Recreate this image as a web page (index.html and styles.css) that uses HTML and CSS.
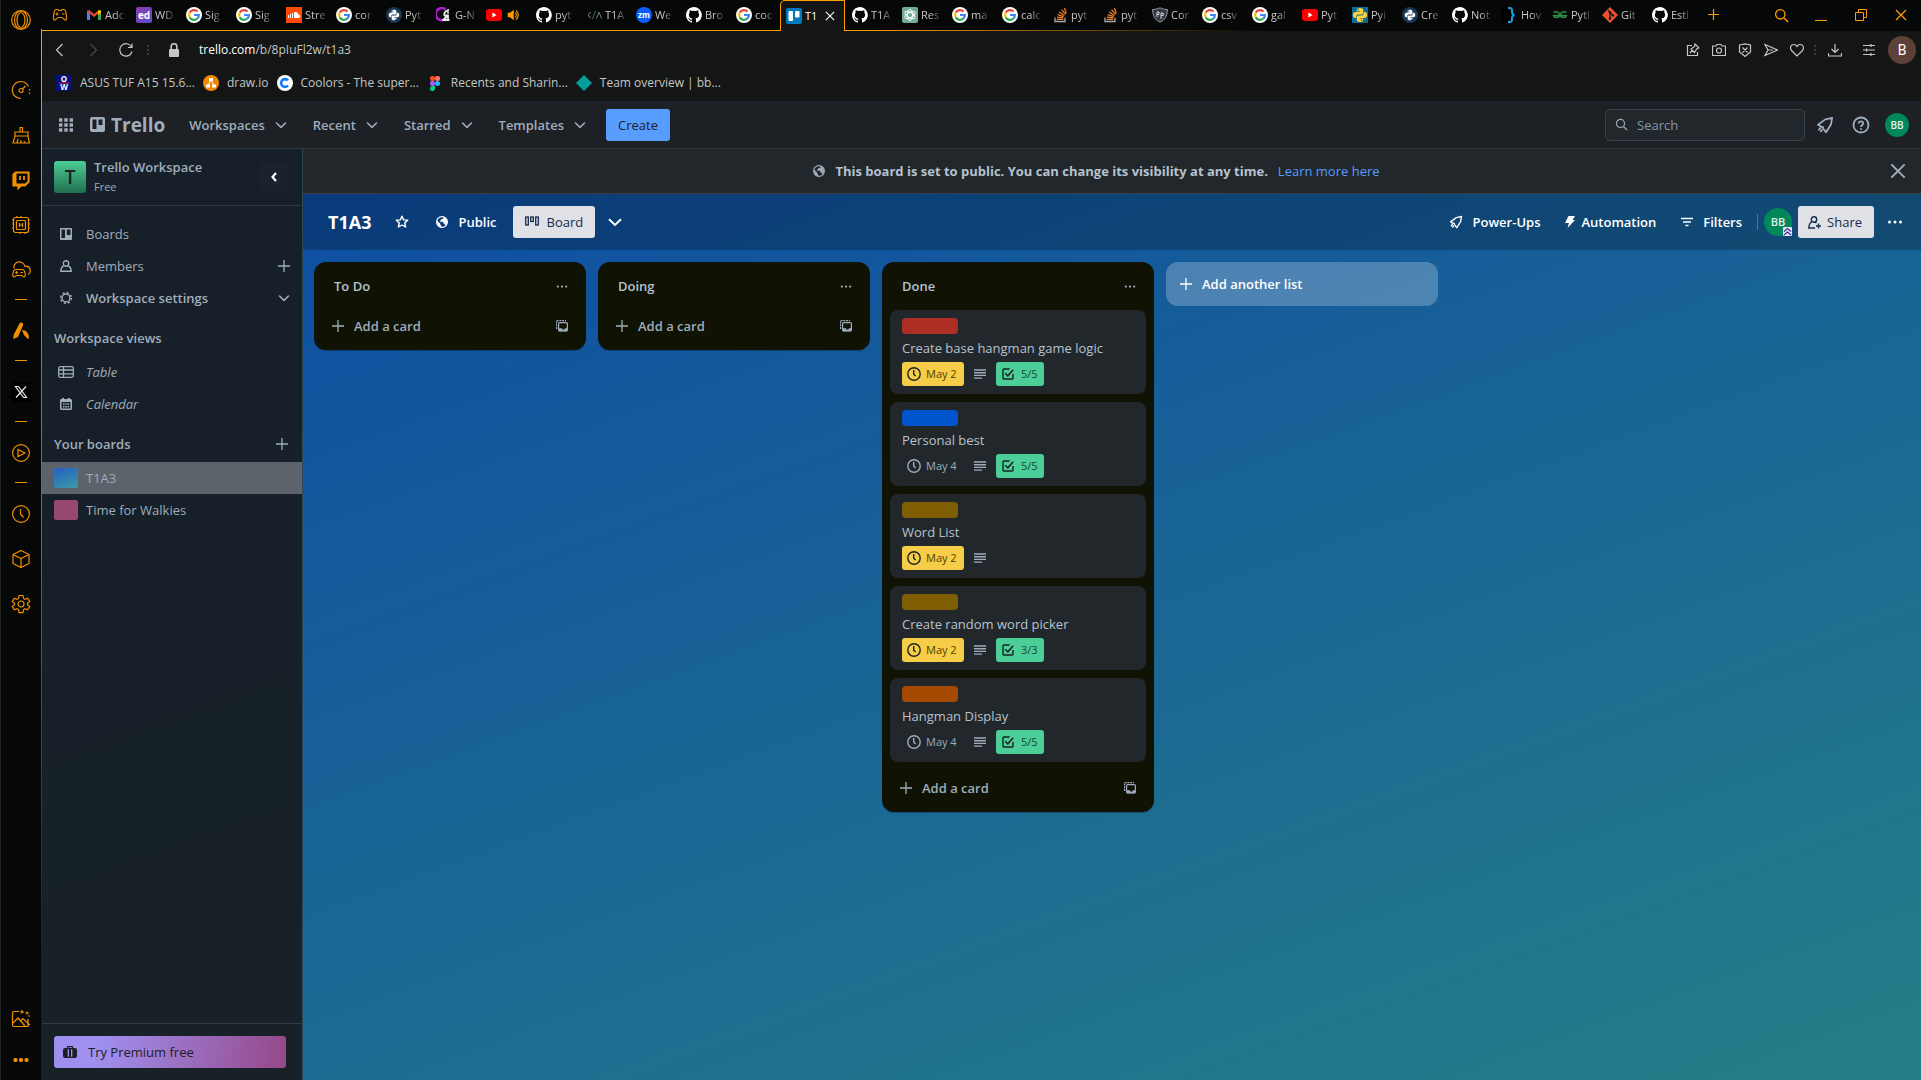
FILE: index.html
```html
<!DOCTYPE html>
<html lang="en">
<head>
<meta charset="utf-8">
<meta name="viewport" content="width=device-width, initial-scale=1">
<title>T1A3 | Trello</title>
<link rel="stylesheet" href="styles.css">
</head>
<body>
<svg class="defs" aria-hidden="true">
  <defs>
    <linearGradient id="edx" x1="0" y1="0" x2="1" y2="1"><stop offset="0" stop-color="#8a3fa8"/><stop offset="1" stop-color="#5b4bd0"/></linearGradient>
    <symbol id="google" viewBox="0 0 16 16"><circle cx="8" cy="8" r="8" fill="#fff"/><g fill="none" stroke-width="2.2"><path d="M11.6 4.6A4.9 4.9 0 0 0 3.7 5.6" stroke="#ea4335"/><path d="M3.7 5.6a4.9 4.9 0 0 0 0 4.8" stroke="#fbbc05"/><path d="M3.7 10.4a4.9 4.9 0 0 0 7.5 1.3" stroke="#34a853"/><path d="M11.2 11.7A4.9 4.9 0 0 0 12.9 8H8" stroke="#4285f4"/></g></symbol>
    <symbol id="github" viewBox="0 0 16 16"><path fill="#fff" d="M8 0C3.6 0 0 3.6 0 8c0 3.5 2.3 6.500 5.500 7.600.4.1.5-.2.500-.4v-1.400c-2.200.5-2.700-1-2.700-1-.4-.9-.9-1.200-.9-1.200-.7-.5.1-.5.1-.5.8.1 1.200.8 1.200.8.7 1.200 1.900.9 2.300.7.1-.5.3-.9.5-1.100-1.800-.2-3.600-.9-3.600-4 0-.9.3-1.600.8-2.100-.1-.2-.4-1 .1-2.100 0 0 .7-.2 2.200.8a7.600 7.600 0 0 1 4 0c1.500-1 2.200-.8 2.200-.8.4 1.100.2 1.900.1 2.100.5.6.8 1.300.8 2.100 0 3.100-1.900 3.700-3.600 3.900.3.300.5.800.5 1.500v2.200c0 .2.100.5.600.4A8 8 0 0 0 8 0z"/></symbol>
    <symbol id="youtube" viewBox="0 0 16 16"><rect y="2" width="16" height="12" rx="3" fill="#f00"/><path d="M6.400 5.500v5l4.200-2.500z" fill="#fff"/></symbol>
    <symbol id="pysnake" viewBox="0 0 16 16"><path fill="currentColor" d="M7.900 1C5.500 1 4.800 2 4.800 3v1.500h3.300v.6H3.300C2 5.100 1 6 1 8s.9 2.900 2 2.900h1.300V9.400c0-1.200 1-2 2.100-2h3c1 0 1.800-.8 1.800-1.700V3c0-1.200-1.200-2-3.300-2zM6.400 2.100a.7.7 0 1 1 0 1.400.7.7 0 0 1 0-1.400z"/><path fill="currentColor" d="M8.100 15c2.400 0 3.100-1 3.100-2v-1.500H7.900v-.6h4.800C14 10.900 15 10 15 8s-.9-2.900-2-2.900h-1.300v1.500c0 1.200-1 2-2.100 2h-3c-1 0-1.800.8-1.800 1.700V13c0 1.200 1.200 2 3.300 2zm1.500-1.100a.7.7 0 1 1 0-1.400.7.7 0 0 1 0 1.400z"/></symbol>
    <symbol id="python" viewBox="0 0 16 16"><circle cx="8" cy="8" r="8" fill="#1b3854"/><svg x="2" y="2" width="12" height="12"><use href="#pysnake" color="#fff"/></svg></symbol>
    <symbol id="stack" viewBox="0 0 16 16"><path d="M3 10.500V14.500h10V10.500" fill="none" stroke="#aaa" stroke-width="1.300"/><path d="M4.800 12.400h6.400M5 10.100l6.200.8M5.700 7.600l5.900 2M7.200 5l5.200 3.500M9.500 2.600l4 4.800M12.500 1l1.700 5.500" stroke="#f48024" stroke-width="1.200"/></symbol>
    <symbol id="chev" viewBox="0 0 12 12"><path d="M1.500 4l4.500 4.300L10.500 4" fill="none" stroke="currentColor" stroke-width="1.600" stroke-linecap="round" stroke-linejoin="round"/></symbol>
    <symbol id="plus" viewBox="0 0 12 12"><path d="M6 0v12M0 6h12" stroke="currentColor" stroke-width="1.300"/></symbol>
    <symbol id="cross" viewBox="0 0 12 12"><path d="M1 1l10 10M11 1L1 11" stroke="currentColor" stroke-width="1.300"/></symbol>
    <symbol id="globe" viewBox="0 0 12 12"><circle cx="6" cy="6" r="5.400" fill="none" stroke="currentColor" stroke-width="1.200"/><path fill="currentColor" d="M1 4.500l3.300 3.200v1l1 1v1.800C2.500 11 .7 8.500 1 4.500zM7.500 1v1.200L6.300 3.300H5v1.200H4v1.300h3.300v1.600l1.400.3.500 2.100C12 7.500 11.800 2.500 7.500 1z"/></symbol>
    <symbol id="search" viewBox="0 0 16 16"><circle cx="6.700" cy="6.700" r="5" fill="none" stroke="currentColor" stroke-width="1.400"/><path d="M10.400 10.400L15 15" stroke="currentColor" stroke-width="1.500"/></symbol>
    <symbol id="rocket" viewBox="0 0 16 16"><path d="M14.300 1.700L8.300 3 1.800 7.800l2.600 1.600 1.600.2.600 1.900 2.300 3 4.400-6.900zM2.600 12.200l1.300-1.400M4.200 13.700l1-1.100" fill="none" stroke="currentColor" stroke-width="1.600" stroke-linejoin="round" stroke-linecap="round"/></symbol>
    <symbol id="dots" viewBox="0 0 16 4"><circle cx="2.500" cy="2" r="1.500" fill="currentColor"/><circle cx="8" cy="2" r="1.500" fill="currentColor"/><circle cx="13.500" cy="2" r="1.500" fill="currentColor"/></symbol>
    <symbol id="template" viewBox="0 0 12 12"><path d="M.6 9V.6H10" fill="none" stroke="currentColor" stroke-width="1.200" stroke-dasharray="2 .8"/><rect x="2.600" y="2.600" width="8.800" height="8" rx="1" fill="none" stroke="currentColor" stroke-width="1.200"/><path d="M2.600 8.200h3.600v1.200h2.400V8.200h2.800v3.400H2.600z" fill="currentColor"/></symbol>
    <symbol id="clock" viewBox="0 0 16 16"><circle cx="8" cy="8" r="6.200" fill="none" stroke="currentColor" stroke-width="1.400"/><path d="M7.700 4v4.300l2 1.800" fill="none" stroke="currentColor" stroke-width="1.400"/></symbol>
    <symbol id="lines" viewBox="0 0 12 10"><path d="M0 1h12M0 3.700h12M0 6.400h12M0 9.100h8" stroke="currentColor" stroke-width="1.400"/></symbol>
    <symbol id="check" viewBox="0 0 12 12"><path d="M7.500 1H1.700a.7.700 0 0 0-.7.700v8.600c0 .4.300.7.700.7h8.600c.4 0 .7-.3.700-.7V6" fill="none" stroke="currentColor" stroke-width="1.400"/><path d="M3.200 5.200l2.600 2.600 5.400-6" fill="none" stroke="currentColor" stroke-width="1.500"/></symbol>
  </defs>
</svg>
<div class="browser">
  <nav class="dock" aria-label="Browser sidebar">
    <a href="#" class="dock-home" aria-label="Opera"><svg width="22" height="22" viewBox="0 0 22 22"><circle cx="11" cy="11" r="9.300"/><ellipse cx="11" cy="11" rx="6.500" ry="9"/><ellipse cx="11" cy="11" rx="4" ry="7.500"/></svg></a>
    <div class="dock-items">
      <a href="#" aria-label="Speed"><svg width="20" height="20" viewBox="0 0 20 20"><path d="M10 18.500A8.500 8.500 0 1 1 17.500 6.500"/><path d="M18.500 9v6" stroke-dasharray="1.500 2"/><circle cx="10" cy="10.500" r="2"/><path d="M11.500 9l3-3"/></svg></a>
      <a href="#" aria-label="Cleaner"><svg width="20" height="20" viewBox="0 0 20 20"><path d="M9 7V2.500h2.500V7M4 11V7h13v4M4 11h13l1.500 7H2zM6 18l1-4M10 18v-3M14 18l-1-2"/></svg></a>
      <a href="#" aria-label="Twitch"><svg width="20" height="20" viewBox="0 0 20 20"><path d="M2 4.500L4.500 2H18v10l-4 4h-4l-3 3v-3H2z" fill="currentColor"/><path d="M5.500 3.500H16.500v8L14 13.500H5.500z" fill="#060807" stroke="none"/><path d="M9 6v4M13 6v4" stroke-width="1.800"/></svg></a>
      <a href="#" aria-label="Limiter"><svg width="20" height="20" viewBox="0 0 20 20"><rect x="2.500" y="2.500" width="15" height="15" rx="2"/><rect x="5.500" y="5.500" width="9" height="9" rx="1"/><path d="M8.500 8v4M11.500 8v4M8.500 10h3M1 5h2M1 9h2M1 13h2M17 5h2M17 9h2M17 13h2M6 1v2M10 1v2M14 17v2M9 17v2"/></svg></a>
      <a href="#" aria-label="Cloud gaming"><svg width="20" height="20" viewBox="0 0 20 20"><path d="M3 8.500a5.500 5.500 0 0 1 10.800-2.300A4.500 4.500 0 0 1 17 14.500"/><path d="M4.500 9.500h7c2.500 0 4 7.500 1.500 7.500-1.500 0-1.500-1.500-2.500-1.500h-5C4.500 15.500 4.500 17 3 17 .5 17 2 9.500 4.500 9.500zM4 12.500h3M5.500 11v3M9.500 12.500h2.500" /></svg></a>
      <span class="dash"></span>
      <a href="#" aria-label="Messenger"><svg width="20" height="20" viewBox="0 0 20 20"><path d="M10 1.500c2 0 2.500 1.500 2 3L7 16l-5 2 1-5 5-9.500c.5-1.300 1-2 2-2zM11 9c4 0 7 3 7 8l-1 1-4-4z" fill="currentColor" stroke="none"/></svg></a>
      <span class="dash"></span>
      <a href="#" aria-label="X"><svg width="20" height="20" viewBox="0 0 20 20"><rect width="20" height="20" rx="3" fill="#000" stroke="none"/><path d="M4.500 4.500h3l8 11h-3zM15 4.500L5 15.500" stroke="#e8e8e8"/></svg></a>
      <span class="dash"></span>
      <a href="#" aria-label="Player"><svg width="20" height="20" viewBox="0 0 20 20"><circle cx="10" cy="10" r="8.400"/><path d="M7 6.500l7 3.500-7 3.500z"/></svg></a>
      <span class="dash"></span>
      <a href="#" aria-label="History"><svg width="20" height="20" viewBox="0 0 20 20"><circle cx="10" cy="10" r="8.400"/><path d="M9.500 5v5l3 3.500"/></svg></a>
      <a href="#" aria-label="Extensions"><svg width="20" height="20" viewBox="0 0 20 20"><path d="M10 1.500l8 4v9l-8 4-8-4v-9zM2 5.500l8 4 8-4M10 9.500v9"/></svg></a>
      <a href="#" aria-label="Settings"><svg width="20" height="20" viewBox="0 0 20 20"><path d="M8 1.500h4l.5 3 1.500.9 2.700-1.100 2 3.400L16.500 9.300v1.500l2.200 1.600-2 3.400-2.700-1.100-1.500.9-.5 3H8l-.5-3L6 14.700l-2.700 1.100-2-3.400 2.200-1.600V9.300L1.300 7.700l2-3.400L6 5.400l1.500-.9z"/><circle cx="10" cy="10" r="3"/></svg></a>
    </div>
    <div class="dock-foot">
      <a href="#" aria-label="Wallpaper"><svg width="20" height="20" viewBox="0 0 20 20"><path d="M8 2.500H3a1.500 1.500 0 0 0-1.500 1.500v12A1.500 1.500 0 0 0 3 17.500h14V10M2 14l5-5 7 8M9.500 12L12 9.500l7 6.500M11 1v3.500M9 3h4M16 2.500v3M14.500 4h3.500M17 7h2"/></svg></a>
      <a href="#" aria-label="More"><svg width="16" height="4"><use href="#dots"/></svg></a>
    </div>
  </nav>

  <div class="window">
    <header class="tabstrip">
      <svg class="gx" width="16" height="14" viewBox="0 0 16 14"><path d="M4 1.500h2l.7 1h2.600l.7-1h2c2 0 3.500 9.500 1.700 10.500-1.500.8-2.500-2.500-4-2.500H6.300c-1.500 0-2.500 3.300-4 2.500C.5 11 2 1.500 4 1.500zM3.500 6h3M5 4.500v3M10 6h2.500"/></svg>
      <div class="tabs">
        <a href="#" class="tab"><svg viewBox="0 0 16 16"><path d="M1 13V3.500h3V13z" fill="#4285f4"/><path d="M12 13V3.500h3V13z" fill="#34a853"/><path d="M1 4.500L3 3l5 4 5-4 2 1.500L8 10z" fill="#ea4335"/><path d="M12 3.500h3V6l-3 2z" fill="#fbbc04"/></svg><span>Adc</span></a>
        <a href="#" class="tab"><svg viewBox="0 0 16 16"><rect width="16" height="16" rx="2" fill="url(#edx)"/><text x="8" y="11.500" class="fav-ed">ed</text></svg><span>WD</span></a>
        <a href="#" class="tab"><svg><use href="#google"/></svg><span>Sig</span></a>
        <a href="#" class="tab"><svg><use href="#google"/></svg><span>Sig</span></a>
        <a href="#" class="tab"><svg viewBox="0 0 16 16"><rect width="16" height="16" fill="#ff4a0a"/><path d="M2.500 8v3M4.500 7v4M6.500 6v5" stroke="#fff"/><path d="M8 5.500c2-1 4 0 4.300 2 2.200-.3 2.700 3.500 0 3.500H8z" fill="#fff"/></svg><span>Stre</span></a>
        <a href="#" class="tab"><svg><use href="#google"/></svg><span>cor</span></a>
        <a href="#" class="tab"><svg><use href="#python"/></svg><span>Pyt</span></a>
        <a href="#" class="tab"><svg viewBox="0 0 16 16"><path d="M9.500 2.500A6 6 0 1 0 7 13" fill="none" stroke="#b21fd0" stroke-width="2.500"/><path d="M13 2.800C9 3.500 7.500 7 8.500 8.500H12V13M12 4.500v2M6.500 13.500l5-4.500M8 13h5.500" fill="none" stroke="#eee" stroke-width="1.800"/></svg><span>G-N</span></a>
        <a href="#" class="tab"><svg><use href="#youtube"/></svg><svg class="sound" viewBox="0 0 16 16"><path d="M1 5h3l5-4v14l-5-4H1z" fill="#ff9c00"/><path d="M11 5c2 1.500 2 4.500 0 6M12 2c4 3 4 9 0 12" fill="none" stroke="#ff9c00" stroke-width="1.500"/></svg></a>
        <a href="#" class="tab"><svg><use href="#github"/></svg><span>pyt</span></a>
        <a href="#" class="tab"><svg viewBox="0 0 16 16"><path d="M5 5.500a2.500 2.500 0 1 0 0 5M10.500 11.500L13 5l2.500 6.500" fill="none" stroke="#777"/><path d="M6.500 12l3-8" stroke="#2f7a4a"/></svg><span>T1A</span></a>
        <a href="#" class="tab"><svg viewBox="0 0 16 16"><circle cx="8" cy="8" r="8" fill="#0b5cff"/><text x="8" y="10.500" class="fav-zm">zm</text></svg><span>We</span></a>
        <a href="#" class="tab"><svg><use href="#github"/></svg><span>Bro</span></a>
        <a href="#" class="tab"><svg><use href="#google"/></svg><span>coc</span></a>
        <a href="#" class="tab active"><svg viewBox="0 0 16 16"><rect width="16" height="16" rx="2" fill="#0079bf"/><rect x="2.500" y="3" width="4.500" height="10" rx="1" fill="#fff"/><rect x="9" y="3" width="4.500" height="6.500" rx="1" fill="#fff"/></svg><span>T1</span><svg class="tab-x"><use href="#cross"/></svg></a>
        <a href="#" class="tab"><svg><use href="#github"/></svg><span>T1A</span></a>
        <a href="#" class="tab"><svg viewBox="0 0 16 16"><rect width="16" height="16" rx="2" fill="#74aa9c"/><g fill="none" stroke="#fff" stroke-width=".9"><ellipse cx="8" cy="8" rx="2.600" ry="5.600"/><ellipse cx="8" cy="8" rx="2.600" ry="5.600" transform="rotate(60 8 8)"/><ellipse cx="8" cy="8" rx="2.600" ry="5.600" transform="rotate(120 8 8)"/></g></svg><span>Res</span></a>
        <a href="#" class="tab"><svg><use href="#google"/></svg><span>ma</span></a>
        <a href="#" class="tab"><svg><use href="#google"/></svg><span>calc</span></a>
        <a href="#" class="tab"><svg><use href="#stack"/></svg><span>pyt</span></a>
        <a href="#" class="tab"><svg><use href="#stack"/></svg><span>pyt</span></a>
        <a href="#" class="tab"><svg viewBox="0 0 16 16"><path d="M.5 2.500C5 2.500 6 1 8 1s3 1.500 7.500 1.500C15 9 13 13 8 15 3 13 1 9 .5 2.500z" fill="#33353f" stroke="#9a9da8"/><path d="M5 10V5h2v2.500H5M9 12V6h2.200v2.500H9" fill="none" stroke="#d5d7e0"/></svg><span>Cor</span></a>
        <a href="#" class="tab"><svg><use href="#google"/></svg><span>csv</span></a>
        <a href="#" class="tab"><svg><use href="#google"/></svg><span>gal</span></a>
        <a href="#" class="tab"><svg><use href="#youtube"/></svg><span>Pyt</span></a>
        <a href="#" class="tab"><svg viewBox="0 0 16 16"><rect width="16" height="16" fill="#0e6a94"/><use href="#pysnake" class="snake"/></svg><span>Pyi</span></a>
        <a href="#" class="tab"><svg><use href="#python"/></svg><span>Cre</span></a>
        <a href="#" class="tab"><svg><use href="#github"/></svg><span>Not</span></a>
        <a href="#" class="tab"><svg viewBox="0 0 16 16"><rect width="8" height="16" fill="#000"/><path d="M6 1h2c2 0 2 1 2 3s0 4 2.500 4C10 8 10 10 10 12s0 3-2 3H6" fill="none" stroke="#18a0e0" stroke-width="2"/></svg><span>Hov</span></a>
        <a href="#" class="tab"><svg viewBox="0 0 16 16"><path d="M1.500 5.500c4-2 6 0 6 2.500S3 12 1.500 8.500h13C13 12 8.500 10.500 8.500 8s2-4.500 6-2.500" fill="none" stroke="#2f8d46" stroke-width="1.500"/></svg><span>Pytl</span></a>
        <a href="#" class="tab"><svg viewBox="0 0 16 16"><path d="M8 0l8 8-8 8-8-8z" fill="#f05133"/><path d="M6 3l2 2.500V11M8.500 6l2.500 2.500" stroke="#111" fill="none" stroke-width="1.200"/><circle cx="8" cy="11.500" r="1.300" fill="#111"/><circle cx="8" cy="5.300" r="1.200" fill="#111"/><circle cx="11" cy="8.500" r="1.200" fill="#111"/></svg><span>Git</span></a>
        <a href="#" class="tab"><svg><use href="#github"/></svg><span>Estl</span></a>
      </div>
      <button class="tab-new" aria-label="New tab"><svg><use href="#plus"/></svg></button>
      <div class="win-buttons">
        <button aria-label="Search tabs"><svg width="15" height="15"><use href="#search"/></svg></button>
        <button aria-label="Minimize"><svg width="12" height="12" viewBox="0 0 12 12"><path d="M0 11.500h12" stroke="currentColor"/></svg></button>
        <button aria-label="Restore"><svg width="12" height="12" viewBox="0 0 12 12"><path d="M.5 3.500h8v8h-8zM3.500 3.500v-3h8v8h-3" fill="none" stroke="currentColor"/></svg></button>
        <button aria-label="Close"><svg width="12" height="12"><use href="#cross"/></svg></button>
      </div>
    </header>

    <div class="addressbar">
      <button aria-label="Back"><svg width="10" height="14" viewBox="0 0 10 14"><path d="M7.500 1L1.500 7l6 6"/></svg></button>
      <button aria-label="Forward" class="dim"><svg width="10" height="14" viewBox="0 0 10 14"><path d="M2.500 1l6 6-6 6"/></svg></button>
      <button aria-label="Reload"><svg width="14" height="14" viewBox="0 0 14 14"><path d="M12.500 4A6.200 6.200 0 1 0 13 8.500M13 .5v4H9"/></svg></button>
      <span class="vdots"></span>
      <svg class="lock" width="12" height="14" viewBox="0 0 12 14"><rect x="1" y="6" width="10" height="8" rx="1" fill="#c4c7c6" stroke="none"/><path d="M3.200 6V3.500a2.800 2.800 0 0 1 5.600 0V6" stroke-width="1.600"/></svg>
      <span class="url"><b>trello.com</b>/b/8pIuFl2w/t1a3</span>
      <div class="page-actions">
        <button aria-label="Edit"><svg width="14" height="14" viewBox="0 0 14 14"><path d="M6 2.500H1.500v10h10V9M4 10l2.500-3M9 1l4 4-2 .5L8.500 9.500 5 6l3.500-2.500z"/></svg></button>
        <button aria-label="Snapshot"><svg width="14" height="14" viewBox="0 0 14 14"><path d="M.5 3H4l1-1.500h4L10 3h3.500v9.500H.5z"/><circle cx="7" cy="7.500" r="2.500"/></svg></button>
        <button aria-label="Ad blocker"><svg width="14" height="14" viewBox="0 0 14 14"><path d="M1.500 2L7 .8 12.500 2v7L7 13.500 1.500 9zM4.500 4.500l5 5M9.500 4.500l-5 5"/></svg></button>
        <button aria-label="Send"><svg width="14" height="14" viewBox="0 0 14 14"><path d="M1 1.500L13.500 7 1 12.500 4 7zM4 7h5"/></svg></button>
        <button aria-label="Favourite"><svg width="14" height="14" viewBox="0 0 14 14"><path d="M7 13L1.500 7.500C-.5 4.500 1 1.500 3.700 1.500 5.500 1.500 6.500 2.500 7 3.500c.5-1 1.500-2 3.300-2 2.700 0 4.200 3 2.200 6z"/></svg></button>
        <span class="vdots"></span>
        <button aria-label="Downloads"><svg width="14" height="14" viewBox="0 0 14 14"><path d="M7 1v8.500M3.500 6L7 9.500 10.500 6M.5 10v3h13v-3"/></svg></button>
        <button aria-label="Easy setup" class="setup"><svg width="14" height="14" viewBox="0 0 14 14"><path d="M1 2.500h12M1 7h12M1 11.500h12M9 1v3M4.500 5.500v3M9 10v3"/></svg></button>
        <span class="profile">B</span>
      </div>
    </div>

    <nav class="bookmarks" aria-label="Bookmarks">
      <a href="#"><svg width="16" height="16" viewBox="0 0 16 16"><rect width="16" height="16" fill="#04107c"/><text x="8" y="6.500" class="fav-ow">O</text><text x="8" y="15" class="fav-ow">W</text><path d="M2.500 8h11" stroke="#e0202a"/></svg>ASUS TUF A15 15.6...</a>
      <a href="#"><svg width="16" height="16" viewBox="0 0 16 16"><circle cx="8" cy="8" r="8" fill="#f08705"/><path d="M8 4.500L5 11M8 4.500L11 11" stroke="#fff"/><path d="M6 3h4v3H6zM3 9.500h4v3H3zM9 9.500h4v3H9z" fill="#fff"/></svg>draw.io</a>
      <a href="#"><svg width="16" height="16" viewBox="0 0 16 16"><circle cx="8" cy="8" r="8" fill="#fff"/><path d="M11 5.500a3.900 3.900 0 1 0 0 5" fill="none" stroke="#0d7cf2" stroke-width="2.600"/></svg>Coolors - The super...</a>
      <a href="#"><svg width="16" height="16" viewBox="0 0 16 16"><rect x="3" y="1" width="5" height="5" rx="2" fill="#f24e1e"/><rect x="8" y="1" width="5" height="5" rx="2" fill="#ff7262"/><rect x="3" y="6" width="5" height="5" rx="2" fill="#a259ff"/><circle cx="10.500" cy="8.500" r="2.500" fill="#1abcfe"/><path d="M3 13.500A2.500 2.500 0 0 1 5.500 11H8v2.500a2.500 2.500 0 0 1-5 0z" fill="#0acf83"/></svg>Recents and Sharin...</a>
      <a href="#"><svg width="16" height="16" viewBox="0 0 16 16"><path d="M8 0l8 8-8 8-8-8z" fill="#06a09b"/></svg>Team overview | bb...</a>
    </nav>

    <div class="trello">
      <header class="topnav">
        <button class="icon-btn" aria-label="Apps"><svg width="14" height="14" viewBox="0 0 14 14"><path d="M0 2h14M0 7h14M0 12h14" stroke="currentColor" stroke-width="3.400" stroke-dasharray="3.400 1.900"/></svg></button>
        <a href="#" class="logo"><svg width="15" height="15" viewBox="0 0 15 15"><path fill="currentColor" fill-rule="evenodd" d="M2 0h11a2 2 0 0 1 2 2v11a2 2 0 0 1-2 2H2a2 2 0 0 1-2-2V2a2 2 0 0 1 2-2zM2.500 2.500v9.500h4V2.500zM8.500 2.500v5.500h4V2.500z"/></svg>Trello</a>
        <button class="menu">Workspaces<svg><use href="#chev"/></svg></button>
        <button class="menu">Recent<svg><use href="#chev"/></svg></button>
        <button class="menu">Starred<svg><use href="#chev"/></svg></button>
        <button class="menu">Templates<svg><use href="#chev"/></svg></button>
        <button class="create">Create</button>
        <label class="search"><svg width="13" height="13"><use href="#search"/></svg><input type="text" placeholder="Search" aria-label="Search"></label>
        <button class="icon-btn" aria-label="Notifications"><svg width="18" height="18"><use href="#rocket"/></svg></button>
        <button class="icon-btn" aria-label="Help"><svg width="18" height="18" viewBox="0 0 18 18" fill="none" stroke="currentColor" stroke-width="1.800"><circle cx="9" cy="9" r="7.500"/><path d="M6.700 7.500c0-3 4.700-2.700 4.500 0C11.100 9 9 9 9 11M9 12.300v1.500"/></svg></button>
        <span class="avatar">BB</span>
      </header>

      <div class="body">
        <aside class="side">
          <div class="ws">
            <span class="ws-logo">T</span>
            <div class="ws-name"><strong>Trello Workspace</strong><small>Free</small></div>
            <button class="collapse" aria-label="Collapse sidebar"><svg width="8" height="12" viewBox="0 0 8 12"><path d="M6 2L2.500 6 6 10" fill="none" stroke="#fff" stroke-width="2.200"/></svg></button>
          </div>
          <nav class="side-nav">
            <a href="#" class="row"><svg viewBox="0 0 12 12"><path fill="currentColor" fill-rule="evenodd" d="M1 0h10a1 1 0 0 1 1 1v10a1 1 0 0 1-1 1H1a1 1 0 0 1-1-1V1a1 1 0 0 1 1-1zM1.500 1.500V10h3.500V1.500zM6.800 1.500v5.500H10.500V1.500z"/></svg>Boards</a>
            <a href="#" class="row"><svg viewBox="0 0 12 12" fill="none" stroke="currentColor" stroke-width="1.400"><circle cx="6" cy="3.500" r="2.700"/><path d="M3.800 5.800C2 6.500 1 8 .8 11.200h10.400C11 8 10 6.500 8.200 5.800"/></svg>Members<svg class="end"><use href="#plus"/></svg></a>
            <a href="#" class="row strong"><svg viewBox="0 0 12 12" fill="none" stroke="currentColor"><circle cx="6" cy="6" r="4" stroke-width="1.500"/><circle cx="6" cy="6" r="5.400" stroke-width="1.400" stroke-dasharray="2.100 2.140"/></svg>Workspace settings<svg class="end"><use href="#chev"/></svg></a>
            <h2>Workspace views</h2>
            <a href="#" class="row view"><svg class="wide" viewBox="0 0 16 12" fill="none" stroke="currentColor" stroke-width="1.300"><rect x=".7" y=".7" width="14.600" height="10.600" rx="1.500"/><path d="M1 4h14M1 7.800h14M5.500 1v10"/></svg>Table</a>
            <a href="#" class="row view"><svg viewBox="0 0 12 12"><path fill="currentColor" fill-rule="evenodd" d="M2 0h2v1h4V0h2v1h1l1 1v9l-1 1H1l-1-1V2l1-1h1zM1.500 4v6.500h9V4z"/><path d="M3 6h6M3 8.700h6" stroke="currentColor" stroke-width="1.500" stroke-dasharray="1.500 .75"/></svg>Calendar</a>
            <h2>Your boards<svg class="end"><use href="#plus"/></svg></h2>
            <a href="#" class="row board current"><i class="swatch ocean"></i>T1A3</a>
            <a href="#" class="row board"><i class="swatch pink"></i>Time for Walkies</a>
          </nav>
          <div class="side-foot">
            <button class="premium"><svg width="14" height="12" viewBox="0 0 14 12"><path d="M4.500 2V.7h5V2" fill="none" stroke="currentColor" stroke-width="1.200"/><path fill="currentColor" fill-rule="evenodd" d="M2 2h10a2 2 0 0 1 2 2v6a2 2 0 0 1-2 2H2a2 2 0 0 1-2-2V4a2 2 0 0 1 2-2zM4.700 3.300v7.400h1.300V3.300zM8 3.300v7.400h1.300V3.300z"/></svg>Try Premium free</button>
          </div>
        </aside>

        <main class="content">
          <div class="banner">
            <p><svg width="12" height="12"><use href="#globe"/></svg><strong>This board is set to public. You can change its visibility at any time.</strong><a href="#">Learn more here</a></p>
            <button aria-label="Dismiss"><svg width="16" height="16" viewBox="0 0 12 12"><path d="M1 1l10 10M11 1L1 11" stroke="currentColor" stroke-width="1.500"/></svg></button>
          </div>
          <div class="board-head">
            <h1>T1A3</h1>
            <button class="star" aria-label="Star board"><svg width="14" height="14" viewBox="0 0 14 14"><path d="M7 1.200l1.700 3.700 4 .4-3 2.700.9 4L7 10l-3.600 2 .9-4-3-2.700 4-.4z" fill="none" stroke="currentColor" stroke-width="1.400" stroke-linejoin="round"/></svg></button>
            <button class="head-btn"><svg width="12" height="12"><use href="#globe"/></svg>Public</button>
            <button class="light"><svg width="14" height="12" viewBox="0 0 14 12" fill="none" stroke="currentColor" stroke-width="1.300"><rect x=".7" y="1" width="2.600" height="8"/><rect x="5.700" y="1" width="2.600" height="4.500"/><rect x="10.700" y="1" width="2.600" height="8"/></svg>Board</button>
            <button class="views" aria-label="More views"><svg width="16" height="16" viewBox="0 0 12 12"><path d="M1.500 4l4.500 4.200L10.500 4" fill="none" stroke="currentColor" stroke-width="1.500"/></svg></button>
            <div class="head-right">
              <button class="head-btn"><svg width="14" height="14"><use href="#rocket"/></svg>Power-Ups</button>
              <button class="head-btn bolt"><svg width="10" height="12" viewBox="0 0 10 12"><path d="M3.500 0H10L7.500 4H10L2.500 12 4 7H0z" fill="currentColor"/></svg>Automation</button>
              <button class="head-btn"><svg width="12" height="10" viewBox="0 0 12 10"><path d="M0 1.500h12M2 5h8M4.500 8.500h3" stroke="currentColor" stroke-width="1.400"/></svg>Filters</button>
              <i class="rule"></i>
              <span class="avatar member">BB<svg class="admin" width="9" height="9" viewBox="0 0 9 9"><rect width="9" height="9" rx="1" fill="#e4e4fb"/><path d="M1 4.500l3.500-3 3.500 3M1 8l3.500-3L8 8" fill="none" stroke="#403294" stroke-width="1.300"/></svg></span>
              <button class="light share"><svg width="13" height="13" viewBox="0 0 13 13" fill="none" stroke="currentColor" stroke-width="1.400"><circle cx="6" cy="3.500" r="2.700"/><path d="M4 5.700C2 6.500 1 8.500.8 12H7M7 6.500h1.500M10.500 7.500v5M8 10h5"/></svg>Share</button>
              <button class="more" aria-label="Show menu"><svg width="16" height="4"><use href="#dots"/></svg></button>
            </div>
          </div>

          <div class="lists">
            <section class="list">
              <header><h2>To Do</h2><button aria-label="List actions"><svg width="12" height="3"><use href="#dots"/></svg></button></header>
              <footer><button class="add"><svg><use href="#plus"/></svg>Add a card</button><button aria-label="Create from template"><svg width="12" height="12"><use href="#template"/></svg></button></footer>
            </section>
            <section class="list">
              <header><h2>Doing</h2><button aria-label="List actions"><svg width="12" height="3"><use href="#dots"/></svg></button></header>
              <footer><button class="add"><svg><use href="#plus"/></svg>Add a card</button><button aria-label="Create from template"><svg width="12" height="12"><use href="#template"/></svg></button></footer>
            </section>
            <section class="list">
              <header><h2>Done</h2><button aria-label="List actions"><svg width="12" height="3"><use href="#dots"/></svg></button></header>
              <article class="card"><i class="label red"></i><h3>Create base hangman game logic</h3><div class="badges"><span class="due soon"><svg><use href="#clock"/></svg>May 2</span><svg class="desc"><use href="#lines"/></svg><span class="done"><svg><use href="#check"/></svg>5/5</span></div></article>
              <article class="card"><i class="label blue"></i><h3>Personal best</h3><div class="badges"><span class="due"><svg><use href="#clock"/></svg>May 4</span><svg class="desc"><use href="#lines"/></svg><span class="done"><svg><use href="#check"/></svg>5/5</span></div></article>
              <article class="card"><i class="label yellow"></i><h3>Word List</h3><div class="badges"><span class="due soon"><svg><use href="#clock"/></svg>May 2</span><svg class="desc"><use href="#lines"/></svg></div></article>
              <article class="card"><i class="label yellow"></i><h3>Create random word picker</h3><div class="badges"><span class="due soon"><svg><use href="#clock"/></svg>May 2</span><svg class="desc"><use href="#lines"/></svg><span class="done"><svg><use href="#check"/></svg>3/3</span></div></article>
              <article class="card"><i class="label orange"></i><h3>Hangman Display</h3><div class="badges"><span class="due"><svg><use href="#clock"/></svg>May 4</span><svg class="desc"><use href="#lines"/></svg><span class="done"><svg><use href="#check"/></svg>5/5</span></div></article>
              <footer><button class="add"><svg><use href="#plus"/></svg>Add a card</button><button aria-label="Create from template"><svg width="12" height="12"><use href="#template"/></svg></button></footer>
            </section>
            <button class="add-list"><svg><use href="#plus"/></svg>Add another list</button>
          </div>
        </main>
      </div>
    </div>
  </div>
</div>
</body>
</html>
```

FILE: styles.css
```css
* { box-sizing: border-box; }
body { margin: 0; background: #060807; color: #9fadbc; font: 13px/20px "Open Sans", "Noto Sans", sans-serif; }
button { margin: 0; padding: 0; border: 0; background: none; color: inherit; font: inherit; display: flex; align-items: center; justify-content: center; }
a { color: inherit; text-decoration: none; }
h1, h2, h3, p { margin: 0; font-weight: 600; font-size: inherit; }
svg { display: block; flex: none; }
.defs { position: absolute; width: 0; height: 0; }
.browser { display: flex; min-height: 100vh; border-left: 1px solid #222423; }

/* Browser side dock */
.dock { flex: none; width: 41px; display: flex; flex-direction: column; color: #f09000; border-right: 1px solid; border-image: linear-gradient(transparent 30px, #ff9c00 30px, #8a5608 600px, #1b1c1b 980px) 1; }
.dock svg { fill: none; stroke: currentColor; stroke-width: 1.200; }
.dock a { display: flex; align-items: center; justify-content: center; height: 45px; }
.dock .dock-home { height: 40px; margin-bottom: 27px; }
.dash { display: block; width: 12px; height: 1px; margin: 7px auto 8px; background: #f09000; }
.dock-foot { margin-top: auto; }
.dock .dock-foot a { height: 41px; }

/* Tabs */
.window { flex: 1; min-width: 0; display: flex; flex-direction: column; }
.tabstrip { display: flex; height: 31px; background: linear-gradient(90deg, #ff9c00 820px, transparent 1220px) bottom / 100% 1px no-repeat; color: #c4c7c6; font-size: 11px; }
.gx { margin: 8px 16px 0 10px; fill: none; stroke: #f09000; stroke-width: 1.200; }
.tabs { display: flex; }
.tab { display: flex; align-items: center; gap: 3px; width: 50px; height: 30px; padding: 0 8px 0 2px; }
.tab svg { width: 16px; height: 16px; }
.tab span { white-space: nowrap; -webkit-mask-image: linear-gradient(90deg, #000 50%, #0004); mask-image: linear-gradient(90deg, #000 50%, #0004); }
.tab .sound { width: 12px; height: 12px; margin-left: 2px; }
.tab.active { width: 65px; height: 31px; padding: 0 9px 0 5px; margin-left: -4px; background: #141615; border: 1px solid #ff9c00; border-bottom: 0; border-top-left-radius: 5px; color: #fff; }
.tab.active + .tab { margin-left: 5px; }
.tab.active span { -webkit-mask-image: none; mask-image: none; }
.tab.active .tab-x { width: 10px; height: 10px; margin-left: auto; }
.tab-new, .win-buttons { color: #ff9c00; }
.tab-new { width: 16px; height: 28px; margin-left: 5px; }
.tab-new svg { width: 11px; height: 11px; }
.win-buttons { display: flex; height: 30px; margin-left: auto; }
.win-buttons button { width: 40px; }
.fav-ed, .fav-zm, .fav-ow { fill: #fff; text-anchor: middle; font-weight: 700; }
.fav-ed { font-size: 10px; }
.fav-zm, .fav-ow { font-size: 8px; }
.snake { color: #ffd43b; }

/* Address bar and bookmarks */
.addressbar { display: flex; align-items: center; height: 38px; padding: 0 5px 0 9px; background: #141615; color: #c4c7c6; }
.addressbar svg { fill: none; stroke: currentColor; stroke-width: 1.200; }
.addressbar > button { width: 17px; height: 24px; margin-right: 16px; }
.addressbar > button:nth-child(3) { margin-right: 13px; }
.addressbar .dim { color: #4a4c4b; }
.vdots { width: 2px; height: 10px; background: repeating-linear-gradient(#3a3c3b 0 2px, transparent 2px 4px); }
.lock { margin: 0 19px 0 19px; }
.url { font-size: 12px; }
.url b { color: #fff; font-weight: 400; }
.page-actions { display: flex; align-items: center; margin-left: auto; }
.page-actions button { width: 26px; height: 24px; }
.page-actions .vdots { margin: 0 6px 0 4px; }
.page-actions .setup { margin: 0 6px 0 8px; }
.profile { width: 28px; height: 28px; border-radius: 50%; background: #5d4037; color: #fff; font: 14px/28px Roboto, sans-serif; text-align: center; }
.bookmarks { display: flex; gap: 8px; height: 32px; padding: 0 14px 4px; background: #141615; color: #c4c7c6; font-size: 12px; }
.bookmarks a { display: flex; align-items: center; gap: 8px; }

/* Trello top bar */
.trello { flex: 1; display: flex; flex-direction: column; background: #1d2125; }
.topnav { display: flex; align-items: center; height: 48px; padding: 0 12px 0 8px; border-bottom: 1px solid #2f383d; font-weight: 600; }
.icon-btn { width: 32px; height: 32px; margin-right: 4px; }
.logo { display: flex; align-items: center; gap: 6px; margin: 0 12px 0 4px; font-size: 19px; font-weight: 700; }
.menu { height: 32px; padding: 0 14px 0 12px; gap: 10px; }
.menu svg, .side svg { width: 12px; height: 12px; }
.create { height: 32px; padding: 0 12px; margin-left: 6px; border-radius: 3px; background: #579dff; color: #1d2125; font-weight: 400; }
.search { display: flex; align-items: center; gap: 9px; width: 200px; height: 32px; margin: 0 4px 0 auto; padding: 0 9px; border: 1px solid #38444b; border-radius: 5px; background: #22272b; }
.search input { width: 100%; padding: 0; border: 0; outline: 0; background: none; color: inherit; font: 400 13px/20px "Open Sans", sans-serif; }
.search input::placeholder { color: #8696a7; opacity: 1; }
.avatar { width: 24px; height: 24px; margin-left: 4px; border-radius: 50%; background: #00875a; color: #e6f2ee; font-size: 10px; line-height: 24px; font-weight: 600; text-align: center; }

.body { flex: 1; display: flex; background: linear-gradient(160deg, #0b49a5, #267f87); }

/* Workspace sidebar */
.side { flex: none; width: 261px; display: flex; flex-direction: column; background: rgba(24, 30, 35, .96); border-right: 1px solid #2f4656; }
.ws { display: flex; align-items: center; height: 57px; padding: 0 14px 0 12px; border-bottom: 1px solid #303a45; }
.ws-logo { width: 32px; height: 32px; margin-right: 8px; border-radius: 3px; background: linear-gradient(#4bce97, #216e4e); color: #1d2125; font-size: 19px; line-height: 32px; font-weight: 600; text-align: center; }
.ws-name { flex: 1; }
.ws-name strong, .ws-name small { display: block; font-weight: 600; }
.ws-name small { font-size: 11px; font-weight: 400; }
.collapse { width: 28px; height: 28px; background: #1b222d; }
.side-nav { padding-top: 12px; }
.row { display: flex; align-items: center; gap: 14px; height: 32px; padding: 0 12px 0 18px; }
.row .end, h2 .end { margin-left: auto; }
.row .wide { width: 16px; margin: 0 -2px; }
.strong { font-weight: 600; }
.view { font-style: italic; }
.side h2 { display: flex; align-items: center; height: 42px; padding: 6px 14px 0 12px; }
.row.board { gap: 8px; padding-left: 12px; }
.swatch { width: 24px; height: 20px; border-radius: 2px; }
.ocean { background: linear-gradient(160deg, #2560c8, #3d9aa3); }
.pink { background: #964870; }
.current { background: #5c636a; }
.side-foot { margin-top: auto; padding: 12px; border-top: 1px solid #303a45; }
.premium { width: 232px; height: 32px; gap: 11px; padding-left: 9px; justify-content: flex-start; border-radius: 3px; background: linear-gradient(100deg, #9f8fef 20%, #964888); color: #1d2125; }
.side .premium svg { width: 14px; }

/* Banner and board header */
.content { flex: 1; min-width: 0; }
.banner { display: flex; align-items: center; height: 45px; padding-right: 15px; background: #22272b; border-bottom: 1px solid #384148; }
.banner p { flex: 1; display: flex; align-items: center; justify-content: center; gap: 10px; font-weight: 400; }
.banner strong { font-weight: 700; color: #b6c2cf; }
.banner p a { color: #579dff; }
.board-head { display: flex; align-items: center; height: 56px; padding: 0 12px 0 25px; background: rgba(0, 0, 0, .24); color: #fff; font-weight: 600; }
h1 { font-size: 18px; font-weight: 700; }
.star { width: 32px; height: 32px; margin: 0 8px 0 15px; }
.head-btn { height: 32px; padding: 0 9px 0 10px; gap: 10px; }
.bolt { gap: 6px; }
.light { height: 32px; padding: 0 12px; gap: 8px; margin-left: 7px; border-radius: 3px; background: #dfe1e6; color: #172b4d; font-weight: 400; }
.views { width: 32px; height: 32px; margin-left: 4px; }
.head-right { display: flex; align-items: center; gap: 6px; margin-left: auto; }
.rule { width: 1px; height: 16px; background: rgba(255, 255, 255, .25); }
.member { position: relative; width: 28px; height: 28px; margin-left: 0; font-size: 11px; line-height: 28px; }
.admin { position: absolute; right: 0; bottom: 0; }
.share { margin: 0; padding: 0 12px 0 10px; gap: 6px; }
.more { width: 29px; height: 32px; }

/* Lists */
.lists { display: flex; align-items: flex-start; gap: 12px; padding: 12px 11px; }
.list { flex: none; width: 272px; padding: 8px; border-radius: 12px; background: #101204; box-shadow: 0 1px 1px rgba(9, 30, 66, .4); }
.list header { display: flex; align-items: center; justify-content: space-between; height: 32px; margin-bottom: 8px; padding: 0 10px 0 12px; color: #b6c2cf; }
.list header button { color: #9fadbc; }
.list footer { display: flex; align-items: center; justify-content: space-between; height: 32px; padding: 0 10px; font-weight: 600; }
.card + footer { margin-top: 10px; }
.add { gap: 10px; }
.add svg, .add-list svg { width: 12px; height: 12px; }
.card { display: flex; flex-direction: column; height: 84px; padding: 8px 12px; margin-bottom: 8px; border-radius: 8px; background: #22272b; color: #b6c2cf; }
.label { width: 56px; height: 16px; margin-bottom: 4px; border-radius: 4px; }
.red { background: #ae2e24; }
.blue { background: #0055cc; }
.yellow { background: #7f5f01; }
.orange { background: #a54800; }
.card h3 { margin-bottom: 4px; font-weight: 400; }
.badges { display: flex; align-items: center; color: #9fadbc; font-size: 11px; }
.due, .done { display: flex; align-items: center; height: 24px; border-radius: 3px; }
.due { width: 62px; padding-left: 4px; gap: 4px; }
.due svg { width: 16px; height: 16px; }
.soon { background: #f5cd47; color: #533f04; }
.soon svg, .done svg { color: #1d2125; }
.desc { width: 12px; height: 10px; margin: 0 10px; }
.done { width: 48px; padding-left: 6px; gap: 7px; background: #4bce97; color: #164b35; }
.done svg { width: 12px; height: 12px; }
.add-list { flex: none; width: 272px; height: 44px; justify-content: flex-start; gap: 10px; padding-left: 14px; border-radius: 12px; background: rgba(255, 255, 255, .24); color: #fff; font-weight: 600; }
```
